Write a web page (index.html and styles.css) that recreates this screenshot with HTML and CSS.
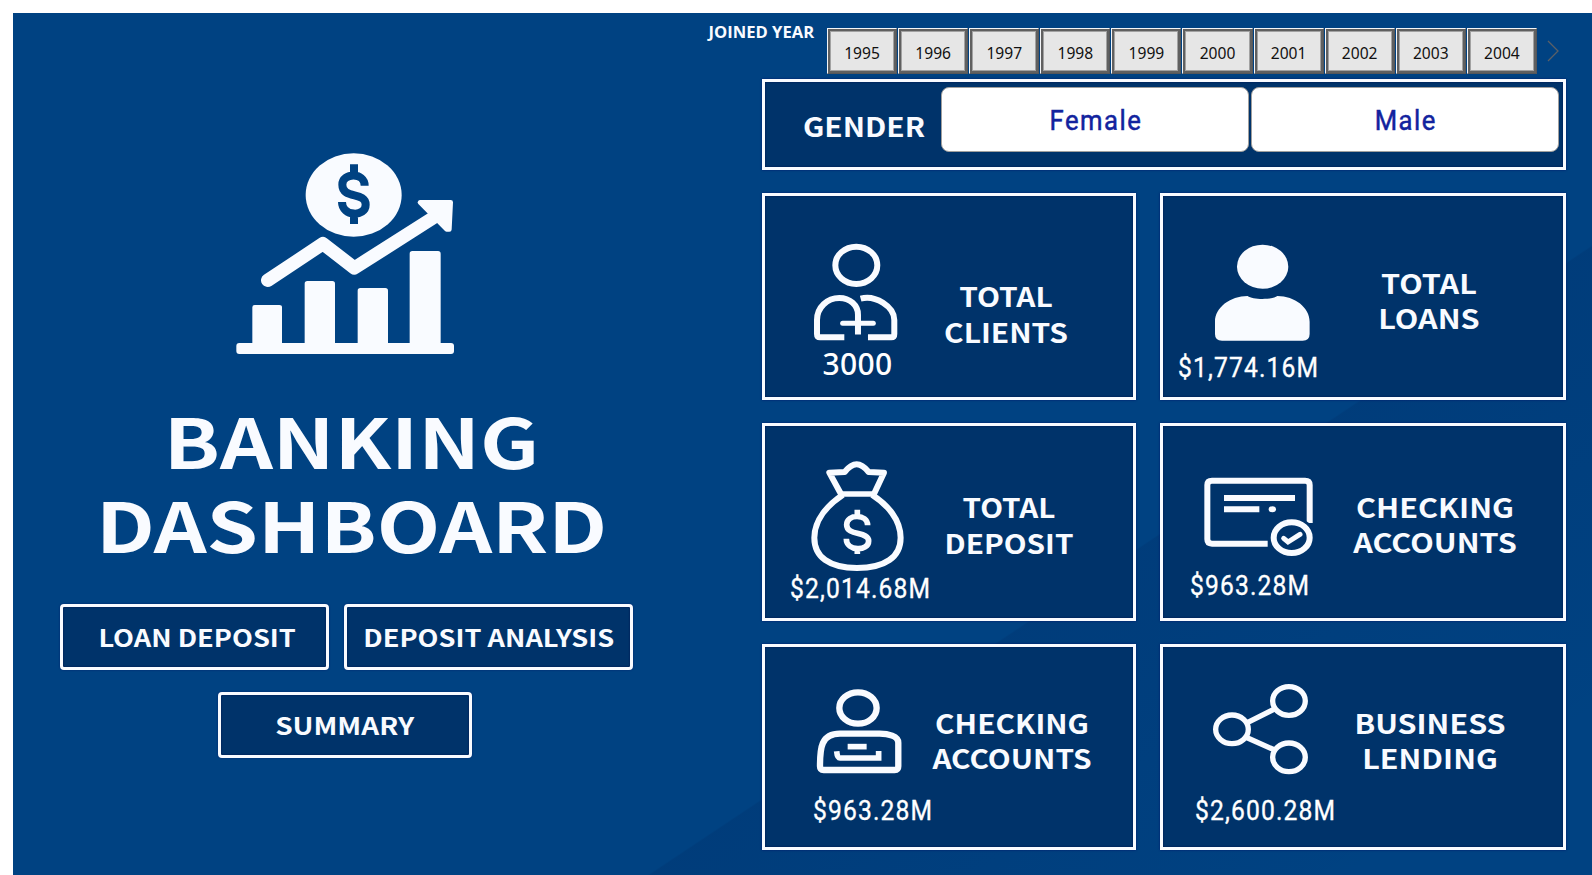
FILE: index.html
```html
<!DOCTYPE html>
<html lang="en">
<head>
<meta charset="utf-8">
<title>Banking Dashboard</title>
<link rel="stylesheet" href="styles.css">
</head>
<body>
<main class="stage">
  <section class="intro">
    <svg class="intro-logo" viewBox="0 0 870 720" fill="#f9fbff">
      <ellipse cx="461" cy="195" rx="144" ry="125"/>
      <path d="M494 167C494 126 427 128 427 164C427 209 497 184 497 224C497 262 426 260 426 216M462 103V138M462 248V282" fill="none" stroke="#004282" stroke-width="24"/>
      <path d="M203 451L369 341L463 414L708 258" fill="none" stroke="#f9fbff" stroke-width="40" stroke-linecap="round" stroke-linejoin="round"/>
      <path d="M660 217L752 217L748 298L740 298Z" stroke="#f9fbff" stroke-width="14" stroke-linejoin="round"/>
      <path d="M157 650V532Q157 525 164 525H238Q246 525 246 532V650ZM314 650V461Q314 453 322 453H397Q405 453 405 461V650ZM473 650V482Q473 474 481 474H556Q564 474 564 482V650ZM629 650V371Q629 363 637 363H714Q722 363 722 371V650Z"/>
      <rect x="109" y="639" width="653" height="33" rx="9"/>
    </svg>
    <h1 class="title"><span>BANKING</span><span>DASHBOARD</span></h1>
    <nav class="links">
      <a class="link link-loan"><span>LOAN DEPOSIT</span></a>
      <a class="link link-deposit"><span>DEPOSIT ANALYSIS</span></a>
      <a class="link link-summary"><span>SUMMARY</span></a>
    </nav>
  </section>

  <section class="board">
    <div class="years">
      <span class="years-label">JOINED YEAR</span>
      <div class="years-list">
        <span class="year">1995</span><span class="year">1996</span><span class="year">1997</span><span class="year">1998</span><span class="year">1999</span><span class="year">2000</span><span class="year">2001</span><span class="year">2002</span><span class="year">2003</span><span class="year">2004</span>
      </div>
      <svg class="years-next" viewBox="0 0 12 22"><path d="M1 1L11 11L1 21" fill="none" stroke="#5b6066" stroke-width="1.3"/></svg>
    </div>

    <div class="gender panel">
      <span class="gender-label"><span>GENDER</span></span>
      <div class="gender-options">
        <span class="option"><span>Female</span></span>
        <span class="option"><span>Male</span></span>
      </div>
    </div>

    <div class="cards">
      <article class="card panel clients">
        <div class="metric">
          <svg class="icon" viewBox="180 180 280 310" fill="none" stroke="#f9fbff" stroke-width="18">
            <ellipse cx="319" cy="256" rx="63" ry="56"/>
            <path d="M283 472H210Q201 472 201 462V420C201 382 232 354 268 354C300 354 324 376 324 404V464"/>
            <path d="M278 430H370" stroke-linecap="round" stroke-width="15"/>
            <path d="M332 356C376 344 433 380 433 420V462Q433 472 424 472H354"/>
          </svg>
          <span class="value value-plain">3000</span>
        </div>
        <h2 class="label"><span>TOTAL</span><span>CLIENTS</span></h2>
      </article>

      <article class="card panel loans">
        <div class="metric">
          <svg class="icon" viewBox="180 180 310 310" fill="#f9fbff">
            <ellipse cx="338" cy="260" rx="77" ry="66"/>
            <path d="M195 462V425C195 383 240 348 293 348C308 360 366 360 382 348C435 348 479 383 479 425V462Q479 482 458 482H216Q195 482 195 462Z"/>
          </svg>
          <span class="value">$1,774.16M</span>
        </div>
        <h2 class="label"><span>TOTAL</span><span>LOANS</span></h2>
      </article>

      <article class="card panel deposit">
        <div class="metric">
          <svg class="icon" viewBox="170 140 310 350" fill="none" stroke="#f9fbff" stroke-width="18" stroke-linejoin="round">
            <path d="M275 251L240 187L286 185C300 168 311 162 322 162C333 162 344 168 358 185L404 187L374 251"/>
            <path d="M272 251H377" stroke-width="16"/>
            <path d="M281 253C236 283 195 328 195 382C195 440 240 473 323 473C408 473 454 440 454 382C454 328 415 283 368 253"/>
            <path d="M355 345C355 310 292 310 292 343C292 378 358 362 358 392C358 424 291 424 291 385M324 298V323M324 406V431" stroke-width="17"/>
          </svg>
          <span class="value">$2,014.68M</span>
        </div>
        <h2 class="label"><span>TOTAL</span><span>DEPOSIT</span></h2>
      </article>

      <article class="card panel checking">
        <div class="metric">
          <svg class="icon" viewBox="150 190 350 260" fill="none" stroke="#f9fbff" stroke-width="18">
            <path d="M353 402H186Q172 402 172 389V226Q172 213 186 213H465Q479 213 479 226V340"/>
            <path d="M222 265H435M222 299H328"/>
            <ellipse cx="367" cy="299" rx="11" ry="9" fill="#f9fbff" stroke="none"/>
            <ellipse cx="425" cy="384" rx="72" ry="63" fill="#00336a" stroke="none"/>
            <ellipse cx="425" cy="384" rx="54" ry="46"/>
            <path d="M401 386L414 397L450 374" stroke-width="15" stroke-linecap="round"/>
          </svg>
          <span class="value">$963.28M</span>
        </div>
        <h2 class="label"><span>CHECKING</span><span>ACCOUNTS</span></h2>
      </article>

      <article class="card panel accounts">
        <div class="metric">
          <svg class="icon" viewBox="190 160 280 280" fill="none" stroke="#f9fbff" stroke-width="19">
            <ellipse cx="325" cy="232" rx="56" ry="47"/>
            <path d="M211 407C211 352 214 309 271 309H390C415 309 446 316 446 336V407Q446 418 435 418H222Q211 418 211 407Z"/>
            <path d="M294 348H351" stroke-width="17"/>
            <path d="M261 362C262 374 264 382 271 382H387V361" stroke-width="17"/>
          </svg>
          <span class="value">$963.28M</span>
        </div>
        <h2 class="label"><span>CHECKING</span><span>ACCOUNTS</span></h2>
      </article>

      <article class="card panel lending">
        <div class="metric">
          <svg class="icon" viewBox="180 150 310 290" fill="none" stroke="#f9fbff" stroke-width="16">
            <ellipse cx="417" cy="213" rx="49" ry="43"/>
            <ellipse cx="246" cy="298" rx="49" ry="43"/>
            <ellipse cx="417" cy="382" rx="49" ry="43"/>
            <path d="M292 278L376 236M288 322L374 360"/>
          </svg>
          <span class="value">$2,600.28M</span>
        </div>
        <h2 class="label"><span>BUSINESS</span><span>LENDING</span></h2>
      </article>
    </div>
  </section>
</main>
</body>
</html>
```
FILE: styles.css
```css
* { box-sizing: border-box; }

body {
  margin: 0;
  padding: 13px 0 0 13px;
  width: 1592px;
  height: 875px;
  overflow: hidden;
  background: #fff;
  font-family: "Noto Sans CJK SC", "Noto Sans", sans-serif;
  color: #f9fbff;
}

.stage {
  display: flex;
  height: 862px;
  background: linear-gradient(146.3deg, transparent 67.1%, rgba(0, 20, 70, .12) 67.2%, rgba(0, 20, 70, 0) 92%), #004282;
}

.intro { width: 687px; flex: none; }
.intro-logo { display: block; width: 290px; height: 240px; margin: 117px 0 0 187px; }

.title {
  width: 573px;
  margin: 27px 0 0 52px;
  font-size: 69px;
  font-weight: 700;
  line-height: 84px;
  text-align: center;
}
.title span { display: block; transform: scaleX(1.195); }

.links {
  display: flex;
  flex-wrap: wrap;
  justify-content: center;
  gap: 22px 15px;
  width: 573px;
  margin: 39px 0 0 47px;
}
.link {
  display: flex;
  justify-content: center;
  align-items: center;
  height: 66px;
  border: 3.5px solid #f9fbff;
  border-radius: 4px;
  background: #00336a;
  box-shadow: 0 0 2px #00206a, inset 0 0 2px #001248;
  font-size: 24px;
  font-weight: 700;
  line-height: 30px;
  white-space: nowrap;
}
.link span { transform: scaleX(1.133); }
.link-loan { width: 269px; padding-left: 5px; }
.link-deposit { width: 289px; }
.link-summary { width: 254px; margin-right: 4px; }
.link-summary span { transform: scaleX(1.165); }

.board { width: 866px; flex: none; }

.years { display: flex; align-items: flex-start; height: 61px; padding: 15px 0 0 8.5px; }
.years-label {
  width: 118.5px;
  margin-top: -6px;
  font: 700 16.6px/20px "Open Sans", sans-serif;
  white-space: nowrap;
}
.years-list { display: flex; gap: 1px; }
.year {
  width: 70.1px;
  height: 46px;
  padding-top: 7px;
  border: 1px solid #f4f6f8;
  border-right-color: #55575a;
  border-bottom-color: #55575a;
  background: #e6e6e6;
  box-shadow: inset 0 0 0 2px #606060, inset 0 0 0 3px #a2a2a2;
  font: 400 15.6px/34px "Noto Sans", sans-serif;
  text-align: center;
  color: #111;
}
.years-next { width: 12px; height: 22px; margin: 12px 0 0 10px; }

.panel {
  padding: 1px;
  border: 3px solid #f9fbff;
  background: #00336a;
  box-shadow: 0 0 2px #00186a, inset 0 0 2px #001248;
}

.gender { display: flex; height: 91px; margin: 5px 0 0 62px; }
.gender-label {
  width: 175px;
  padding: 25px 0 0 21px;
  font-size: 26.5px;
  font-weight: 700;
  line-height: 36px;
  text-align: center;
}
.gender-label span { display: block; transform: scaleX(1.125); }
.gender-options { display: flex; gap: 2px; padding-top: 4px; }
.option {
  display: flex;
  justify-content: center;
  align-items: center;
  width: 308px;
  height: 65px;
  padding: 2px 0 0 2px;
  border: 1px solid #a19f9d;
  border-radius: 8px;
  background: #fff;
  font: 400 27px/34px Roboto, sans-serif;
  letter-spacing: 1.6px;
  color: #12239e;
  -webkit-text-stroke: .5px #12239e;
}
.option span { transform: scaleX(.95); }

.cards {
  display: grid;
  grid-template-columns: 374px 406px;
  grid-template-rows: 207px 198px 206px;
  gap: 23px 24px;
  margin: 23px 0 0 62px;
}
.card { display: flex; }
.metric { flex: none; width: var(--metric-width); padding-top: var(--icon-top); }
.icon { display: block; width: var(--icon-width); margin-left: var(--icon-left); }
.value {
  display: block;
  margin: var(--value-gap) 0 0 var(--value-left);
  font: 400 28px/30px Roboto, sans-serif;
  letter-spacing: 1.3px;
  white-space: nowrap;
  transform: scaleX(.88);
  transform-origin: left;
  color: #fff;
  -webkit-text-stroke: .35px #fff;
}
.value-plain {
  font: 500 30px/30px "Noto Sans", sans-serif;
  letter-spacing: .3px;
  transform: none;
  -webkit-text-stroke: 0;
}
.label {
  width: 180px;
  margin: var(--label-top) 0 0;
  font-size: 26.6px;
  font-weight: 700;
  line-height: 35.5px;
  text-align: center;
}
.label span { display: block; transform: scaleX(var(--label-stretch)); }

.clients {
  --metric-width: 149.5px; --icon-top: 43px; --icon-width: 93.3px; --icon-left: 44px;
  --value-gap: 6px; --value-left: 56.5px; --label-top: 81px; --label-stretch: 1.125;
}
.loans {
  --metric-width: 174.5px; --icon-top: 43px; --icon-width: 103.3px; --icon-left: 45.5px;
  --value-gap: 10px; --value-left: 14px; --label-top: 67.5px; --label-stretch: 1.15;
}
.deposit {
  --metric-width: 152.5px; --icon-top: 30px; --icon-width: 103.3px; --icon-left: 40.2px;
  --value-gap: 0; --value-left: 23.5px; --label-top: 62px; --label-stretch: 1.115;
}
.checking {
  --metric-width: 181px; --icon-top: 46.3px; --icon-width: 116.7px; --icon-left: 36px;
  --value-gap: 11px; --value-left: 26px; --label-top: 61.5px; --label-stretch: 1.15;
}
.accounts {
  --metric-width: 155.5px; --icon-top: 35.5px; --icon-width: 93.3px; --icon-left: 47.3px;
  --value-gap: 19.5px; --value-left: 47px; --label-top: 56.5px; --label-stretch: 1.12;
}
.lending {
  --metric-width: 175.5px; --icon-top: 32px; --icon-width: 103.3px; --icon-left: 46px;
  --value-gap: 19.5px; --value-left: 31px; --label-top: 56.5px; --label-stretch: 1.145;
}
```
